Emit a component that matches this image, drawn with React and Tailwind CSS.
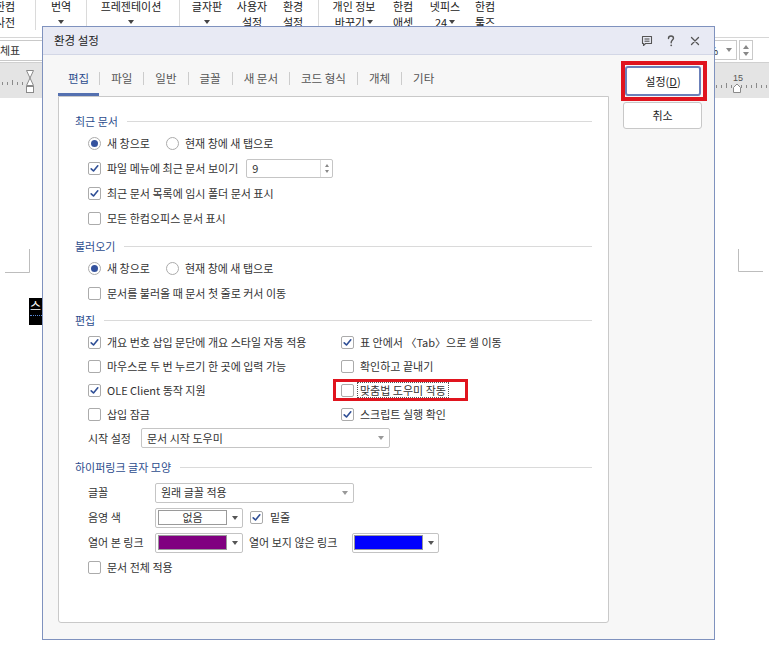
import React from "react";

const FONT = "font-['Noto_Sans_CJK_KR',sans-serif]";

function Caret({ color = "border-t-[#555]" }) {
  return (
    <span
      className={
        "inline-block w-0 h-0 border-l-[3px] border-r-[3px] border-t-[4px] border-l-transparent border-r-transparent " +
        color
      }
    />
  );
}

function Check({ checked }) {
  return (
    <span className="w-[13px] h-[13px] shrink-0 border border-[#ababab] rounded-[2px] bg-white flex items-center justify-center">
      {checked && (
        <svg width="11" height="11" viewBox="0 0 11 11">
          <path
            d="M2.2 5.8 L4.5 8 L8.8 2.8"
            fill="none"
            stroke="#2f4f96"
            strokeWidth="1.6"
            strokeLinecap="round"
            strokeLinejoin="round"
          />
        </svg>
      )}
    </span>
  );
}

function Radio({ checked }) {
  return (
    <span className="w-[13px] h-[13px] shrink-0 rounded-full border border-[#ababab] bg-white flex items-center justify-center">
      {checked && <span className="w-[7px] h-[7px] rounded-full bg-[#34529e]" />}
    </span>
  );
}

function CheckItem({ checked, children }) {
  return (
    <div className="flex items-center gap-[6px]">
      <Check checked={checked} />
      <span className="whitespace-nowrap">{children}</span>
    </div>
  );
}

function RadioRow() {
  return (
    <div className="h-[25px] flex items-center pl-[13px]">
      <div className="flex items-center gap-[6px]">
        <Radio checked />
        <span>새 창으로</span>
      </div>
      <div className="flex items-center gap-[6px] ml-[16px]">
        <Radio />
        <span>현재 창에 새 탭으로</span>
      </div>
    </div>
  );
}

function Header({ children, mt }) {
  return (
    <div className={"flex items-center h-[20px] " + mt}>
      <span className="text-[#2d4d8e] whitespace-nowrap">{children}</span>
      <span className="flex-1 h-px bg-[#dadada] ml-[9px]" />
    </div>
  );
}

function TB({ l1, l2, w, ml }) {
  return (
    <div className={"flex flex-col items-center shrink-0 mt-[-2px] " + w + " " + ml}>
      <span className="whitespace-nowrap h-[16px]">{l1}</span>
      <span className="whitespace-nowrap h-[16px] flex items-center">{l2}</span>
    </div>
  );
}

function Sep({ ml }) {
  return <div className={"w-px h-[30px] bg-[#dadada] shrink-0 " + ml} />;
}

function ColorPick({ swatch, w }) {
  return (
    <div className={"h-[20px] border border-[#c3c3c3] rounded-[2px] bg-white flex items-center pl-[2px] " + w}>
      {swatch}
      <div className="flex-1 flex justify-center">
        <Caret />
      </div>
    </div>
  );
}

export default function App() {
  return (
    <div className={"relative w-[769px] h-[661px] overflow-hidden bg-white flex flex-col text-[#333] " + FONT}>
      {/* Toolbar */}
      <div className="h-[37px] flex items-start text-[11px] leading-[16px] text-[#222] shrink-0">
        <TB l1="한컴" l2="사전" w="w-[26px]" ml="ml-[-8px]" />
        <Sep ml="ml-[17px]" />
        <TB l1="번역" l2={<Caret color="border-t-[#444]" />} w="w-[30px]" ml="ml-[10px]" />
        <Sep ml="ml-[10px]" />
        <TB l1="프레젠테이션" l2={<Caret color="border-t-[#444]" />} w="w-[70px]" ml="ml-[9px]" />
        <Sep ml="ml-[13px]" />
        <TB l1="글자판" l2={<Caret color="border-t-[#444]" />} w="w-[36px]" ml="ml-[9px]" />
        <TB l1="사용자" l2="설정" w="w-[36px]" ml="ml-[9px]" />
        <TB l1="환경" l2="설정" w="w-[26px]" ml="ml-[10px]" />
        <Sep ml="ml-[12px]" />
        <TB
          l1="개인 정보"
          l2={
            <span className="flex items-center gap-[2px]">
              바꾸기
              <Caret color="border-t-[#444]" />
            </span>
          }
          w="w-[52px]"
          ml="ml-[9px]"
        />
        <TB l1="한컴" l2="애셋" w="w-[26px]" ml="ml-[10px]" />
        <TB
          l1="넷피스"
          l2={
            <span className="flex items-center gap-[2px]">
              24
              <Caret color="border-t-[#444]" />
            </span>
          }
          w="w-[36px]"
          ml="ml-[11px]"
        />
        <TB l1="한컴" l2="툴즈" w="w-[26px]" ml="ml-[9px]" />
      </div>

      {/* Second row */}
      <div className="h-[25px] border-t border-[#d6d6d6] flex items-center text-[11px] shrink-0">
        <div className="w-[70px] h-[21px] border border-[#c9c9c9] ml-[-20px] pl-[19px] flex items-center bg-white">
          체표
        </div>
        <div className="ml-auto flex items-center mr-[16px]">
          <div className="w-[38px] h-[20px] border border-[#c9c9c9] bg-white flex items-center pl-[8px]">
            <span>%</span>
            <span className="ml-auto mr-[4px] flex">
              <Caret color="border-t-[#888]" />
            </span>
          </div>
          <div className="w-[14px] h-[20px] ml-[2px] border border-[#c9c9c9] bg-white flex flex-col items-center justify-center gap-[3px]">
            <span className="w-0 h-0 border-l-[3px] border-r-[3px] border-b-[4px] border-l-transparent border-r-transparent border-b-[#888]" />
            <span className="w-0 h-0 border-l-[3px] border-r-[3px] border-t-[4px] border-l-transparent border-r-transparent border-t-[#888]" />
          </div>
        </div>
      </div>

      {/* Ruler */}
      <div className="h-[36px] bg-[#e4e4e4] shrink-0 border-t border-[#d0d0d0]">
        <svg width="769" height="35" viewBox="0 0 769 35">
          <g stroke="#8a8a8a" strokeWidth="1">
            {[2, 7, 12, 17, 22].map((x) => (
              <line key={"l" + x} x1={x + 0.5} y1={x === 12 ? 17 : 19} x2={x + 0.5} y2="22" />
            ))}
            {[716, 721, 726, 731, 741, 746, 751, 756, 761, 766].map((x) => (
              <line key={"r" + x} x1={x + 0.5} y1={x === 726 || x === 756 ? 20 : 22} x2={x + 0.5} y2="25" />
            ))}
          </g>
          <g fill="#fff" stroke="#8a8a8a" strokeWidth="1">
            <path d="M26.5 7.5 H33.5 L30 15 Z" />
            <path d="M30 15 L33.5 22.5 H26.5 Z" />
            <rect x="26.5" y="23.5" width="7" height="6" />
            <path d="M733.5 29.5 V24.5 L737 21 L740.5 24.5 V29.5 Z" />
          </g>
          <text x="733" y="18" fontSize="9" fill="#555" fontFamily="Liberation Sans, sans-serif">
            15
          </text>
        </svg>
      </div>

      {/* Document area */}
      <div className="flex-1 bg-white relative">
        <svg width="769" height="200" viewBox="0 0 769 200" className="block">
          <g stroke="#bdbdbd" strokeWidth="1" fill="none">
            <path d="M29.5 151 V174.5 H5" />
            <path d="M738.5 151 V173.5 H763" />
          </g>
        </svg>
        <div className="ml-[29px] w-[20px] h-[27px] bg-black text-white text-[12px] leading-[16px] pl-[1px] flex flex-col">
          <span>스</span>
          <span className="mt-[1px] border-b border-dotted border-[#5a8ad8] w-[14px]" />
        </div>
      </div>

      {/* Dialog */}
      <div className="absolute left-[42px] top-[26px] w-[673px] h-[614px] border border-[#7f92be] bg-[#f7f7f7] flex flex-col text-[11px]">
        {/* Title bar */}
        <div className="h-[28px] shrink-0 bg-[#e8eaf4] border-b border-[#d3d7e6] flex items-center pl-[11px] pr-[13px]">
          <span className="text-[11.5px] text-[#222]">환경 설정</span>
          <div className="ml-auto flex items-center">
            <svg width="14" height="14" viewBox="0 0 14 14">
              <path
                d="M2.5 2.5 H11.5 V9.5 H5.5 L3.5 11.5 V9.5 H2.5 Z"
                fill="none"
                stroke="#555"
                strokeWidth="1.1"
                strokeLinejoin="round"
              />
              <line x1="4.5" y1="5" x2="9.5" y2="5" stroke="#555" strokeWidth="1.1" />
              <line x1="4.5" y1="7.2" x2="9.5" y2="7.2" stroke="#555" strokeWidth="1.1" />
            </svg>
            <svg width="12" height="14" viewBox="0 0 12 14" className="ml-[11px]">
              <path
                d="M3.5 4.5 C3.5 2.8 4.6 2 6 2 C7.4 2 8.5 2.8 8.5 4.2 C8.5 5.8 6.2 6.2 6.2 8.2 V8.8"
                fill="none"
                stroke="#555"
                strokeWidth="1.4"
                strokeLinecap="round"
              />
              <circle cx="6.2" cy="11.3" r="0.9" fill="#555" />
            </svg>
            <svg width="12" height="14" viewBox="0 0 12 14" className="ml-[12px]">
              <path d="M2.5 3.5 L9.5 10.5 M9.5 3.5 L2.5 10.5" stroke="#555" strokeWidth="1.3" strokeLinecap="round" />
            </svg>
          </div>
        </div>

        {/* Body */}
        <div className="flex-1 flex">
          {/* Left */}
          <div className="pl-[15px] flex flex-col">
            <div className="mt-[11px] h-[30px] flex items-start text-[11.5px] text-[#555]">
              <div className="h-[30px] px-[10px] pt-[2px] leading-[20px] border-b-[3px] border-[#5470b0] text-[#2d4d8e]">
                편집
              </div>
              {["파일", "일반", "글꼴", "새 문서", "코드 형식", "개체", "기타"].map((t) => (
                <React.Fragment key={t}>
                  <span className="w-px h-[13px] bg-[#cccccc] mt-[6px]" />
                  <div className="h-[30px] px-[11px] pt-[2px] leading-[20px] whitespace-nowrap">{t}</div>
                </React.Fragment>
              ))}
            </div>

            <div className="w-[551px] h-[527px] bg-white border border-[#c9c9c9] rounded-b-[3px] px-[16px] pt-[14px] text-[#333] flex flex-col">
              <Header>최근 문서</Header>
              <RadioRow />
              <div className="h-[25px] flex items-center pl-[13px]">
                <CheckItem checked>파일 메뉴에 최근 문서 보이기</CheckItem>
                <div className="ml-[8px] w-[87px] h-[19px] border border-[#c5c5c5] rounded-[2px] bg-white flex items-center">
                  <span className="pl-[5px] flex-1">9</span>
                  <div className="w-[12px] h-full border-l border-[#dddddd] flex flex-col items-center justify-center gap-[3px]">
                    <span className="w-0 h-0 border-l-[2.5px] border-r-[2.5px] border-b-[3px] border-l-transparent border-r-transparent border-b-[#888]" />
                    <span className="w-0 h-0 border-l-[2.5px] border-r-[2.5px] border-t-[3px] border-l-transparent border-r-transparent border-t-[#888]" />
                  </div>
                </div>
              </div>
              <div className="h-[25px] flex items-center pl-[13px]">
                <CheckItem checked>최근 문서 목록에 임시 폴더 문서 표시</CheckItem>
              </div>
              <div className="h-[25px] flex items-center pl-[13px]">
                <CheckItem>모든 한컴오피스 문서 표시</CheckItem>
              </div>

              <Header mt="mt-[5px]">불러오기</Header>
              <RadioRow />
              <div className="h-[25px] flex items-center pl-[13px]">
                <CheckItem>문서를 불러올 때 문서 첫 줄로 커서 이동</CheckItem>
              </div>

              <Header mt="mt-[4px]">편집</Header>
              <div className="h-[24px] flex items-center pl-[13px]">
                <div className="w-[253px]">
                  <CheckItem checked>개요 번호 삽입 문단에 개요 스타일 자동 적용</CheckItem>
                </div>
                <CheckItem checked>표 안에서 〈Tab〉으로 셀 이동</CheckItem>
              </div>
              <div className="h-[24px] flex items-center pl-[13px]">
                <div className="w-[253px]">
                  <CheckItem>마우스로 두 번 누르기 한 곳에 입력 가능</CheckItem>
                </div>
                <CheckItem>확인하고 끝내기</CheckItem>
              </div>
              <div className="h-[24px] flex items-center pl-[13px]">
                <div className="w-[253px]">
                  <CheckItem checked>OLE Client 동작 지원</CheckItem>
                </div>
                <div className="relative flex items-center gap-[3px]">
                  <Check />
                  <span className="border border-dotted border-[#555] px-[2px] leading-[14px] whitespace-nowrap">
                    맞춤법 도우미 작동
                  </span>
                  <div className="absolute left-[-8px] top-[-3px] w-[135px] h-[22px] border-[3px] border-[#e0141e]" />
                </div>
              </div>
              <div className="h-[24px] flex items-center pl-[13px]">
                <div className="w-[253px]">
                  <CheckItem>삽입 잠금</CheckItem>
                </div>
                <CheckItem checked>스크립트 실행 확인</CheckItem>
              </div>
              <div className="h-[24px] flex items-center pl-[13px]">
                <span className="w-[53px]">시작 설정</span>
                <div className="w-[249px] h-[20px] border border-[#c5c5c5] rounded-[2px] bg-white flex items-center pl-[5px] pr-[5px]">
                  <span className="flex-1">문서 시작 도우미</span>
                  <Caret color="border-t-[#999]" />
                </div>
              </div>

              <Header mt="mt-[7px]">하이퍼링크 글자 모양</Header>
              <div className="h-[25px] flex items-center pl-[13px] mt-[3px]">
                <span className="w-[67px]">글꼴</span>
                <div className="w-[199px] h-[20px] border border-[#c5c5c5] rounded-[2px] bg-white flex items-center pl-[5px] pr-[5px]">
                  <span className="flex-1">원래 글꼴 적용</span>
                  <Caret color="border-t-[#999]" />
                </div>
              </div>
              <div className="h-[25px] flex items-center pl-[13px]">
                <span className="w-[67px]">음영 색</span>
                <ColorPick
                  w="w-[88px]"
                  swatch={
                    <div className="w-[69px] h-[15px] border border-[#9a9a9a] bg-white flex items-center justify-center leading-[13px]">
                      없음
                    </div>
                  }
                />
                <div className="ml-[7px] flex items-center gap-[7px]">
                  <Check checked />
                  <span>밑줄</span>
                </div>
              </div>
              <div className="h-[25px] flex items-center pl-[13px]">
                <span className="w-[67px] whitespace-nowrap">열어 본 링크</span>
                <ColorPick
                  w="w-[88px]"
                  swatch={<div className="w-[69px] h-[15px] border border-[#9a9a9a] bg-[#800080]" />}
                />
                <span className="ml-[6px] w-[97px] whitespace-nowrap">열어 보지 않은 링크</span>
                <div className="ml-[6px] w-[87px] h-[20px] border border-[#c3c3c3] rounded-[2px] bg-white flex items-center pl-[1px]">
                  <div className="w-[69px] h-[15px] border border-[#9a9a9a] bg-[#0000ff]" />
                  <div className="flex-1 flex justify-center">
                    <Caret />
                  </div>
                </div>
              </div>
              <div className="h-[25px] flex items-center pl-[13px]">
                <CheckItem>문서 전체 적용</CheckItem>
              </div>
            </div>
          </div>

          {/* Right buttons */}
          <div className="pl-[12px] pt-[6px] flex flex-col">
            <div className="w-[86px] h-[40px] border-[4px] border-[#e0141e]">
              <div className="mt-[1px] w-[76px] h-[30px] bg-white border-2 border-[#6b80b9] rounded-[3px] flex items-center justify-center text-[#222]">
                설정(<span className="underline">D</span>)
              </div>
            </div>
            <div className="ml-[2px] mt-[1px] w-[79px] h-[27px] bg-white border border-[#c8c8c8] rounded-[3px] flex items-center justify-center text-[#222]">
              취소
            </div>
          </div>
        </div>
      </div>
    </div>
  );
}
